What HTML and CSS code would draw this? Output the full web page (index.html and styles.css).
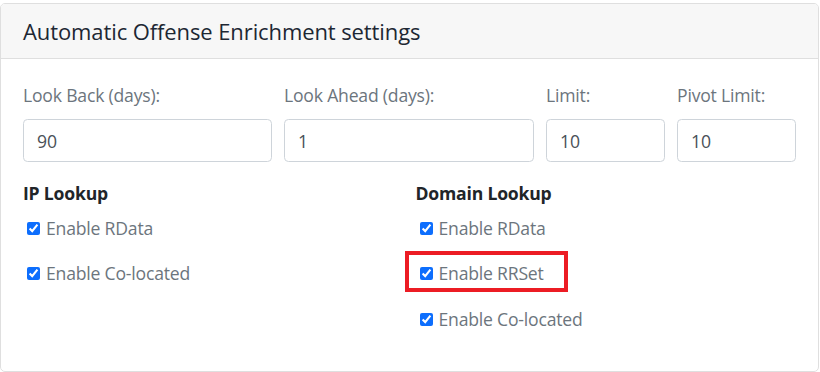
FILE: index.html
```html
<!DOCTYPE html>
<html lang="en">
<head>
    <meta charset="UTF-8">
    <title>Automatic Offense Enrichment settings</title>
    <link rel="stylesheet" href="styles.css">
</head>
<body>

    <div class="card">
        <div class="card-header">
            <h5>Automatic Offense Enrichment settings</h5>
        </div>
        <div class="card-body">
            <div class="field-row">
                <div class="field">
                    <label for="look-back">Look Back (days):</label>
                    <input type="text" id="look-back" value="90">
                </div>
                <div class="field">
                    <label for="look-ahead">Look Ahead (days):</label>
                    <input type="text" id="look-ahead" value="1">
                </div>
                <div class="field">
                    <label for="limit">Limit:</label>
                    <input type="text" id="limit" value="10">
                </div>
                <div class="field">
                    <label for="pivot-limit">Pivot Limit:</label>
                    <input type="text" id="pivot-limit" value="10">
                </div>
            </div>

            <div class="lookup-row">
                <div class="lookup">
                    <h6>IP Lookup</h6>
                    <div class="check-list">
                        <label class="check"><input type="checkbox" checked> Enable RData</label>
                        <label class="check"><input type="checkbox" checked> Enable Co-located</label>
                    </div>
                </div>
                <div class="lookup">
                    <h6>Domain Lookup</h6>
                    <div class="check-list">
                        <label class="check"><input type="checkbox" checked> Enable RData</label>
                        <label class="check highlight"><input type="checkbox" checked> Enable RRSet</label>
                        <label class="check"><input type="checkbox" checked> Enable Co-located</label>
                    </div>
                </div>
            </div>
        </div>
    </div>

</body>
</html>
```

FILE: styles.css
```css
body { font-family: "Open Sans", "Noto Sans", sans-serif; font-size: 17.6px; margin: 0; padding-top: 3px; background-color: #fff; color: #212529; }
.card { width: 819px; height: 369px; box-sizing: border-box; border: 1px solid #dfdfdf; border-radius: 5px; overflow: hidden; }
.card-header { height: 55px; box-sizing: border-box; display: flex; align-items: center; padding: 0 22px; background-color: #f7f7f7; border-bottom: 1px solid #dfdfdf; }
h5 { margin: 0; font-size: 22px; font-weight: 500; line-height: 26px; letter-spacing: -0.1px; color: #1d2733; }
.card-body { padding: 23px 22px 0 22px; }
.field-row { display: grid; grid-template-columns: 249px 250px 119px 119px; gap: 12px; }
.field label { display: block; line-height: 26px; margin-bottom: 11px; letter-spacing: -0.2px; color: #6c757d; }
.field input { width: 100%; height: 43px; box-sizing: border-box; padding: 0 13px; font-family: inherit; font-size: 17.6px; color: #495057; border: 1px solid #ced4da; border-radius: 4.4px; }
.lookup-row { display: grid; grid-template-columns: 1fr 1fr; gap: 12px; margin-top: 18px; }
h6 { margin: 0 0 9px 0; font-size: 17.6px; font-weight: 700; line-height: 26px; letter-spacing: -0.2px; color: #212529; }
.check-list { display: flex; flex-direction: column; gap: 19px; align-items: flex-start; }
.check { display: inline-flex; align-items: center; line-height: 26.4px; letter-spacing: -0.2px; color: #6c757d; position: relative; }
.check input { width: 13px; height: 13px; margin: 0 6px 0 4px; accent-color: #0d6efd; }
.highlight::after { content: ""; position: absolute; left: -11px; top: -9px; width: 163px; height: 41px; box-sizing: border-box; border: 4px solid #ec1c24; }
```
